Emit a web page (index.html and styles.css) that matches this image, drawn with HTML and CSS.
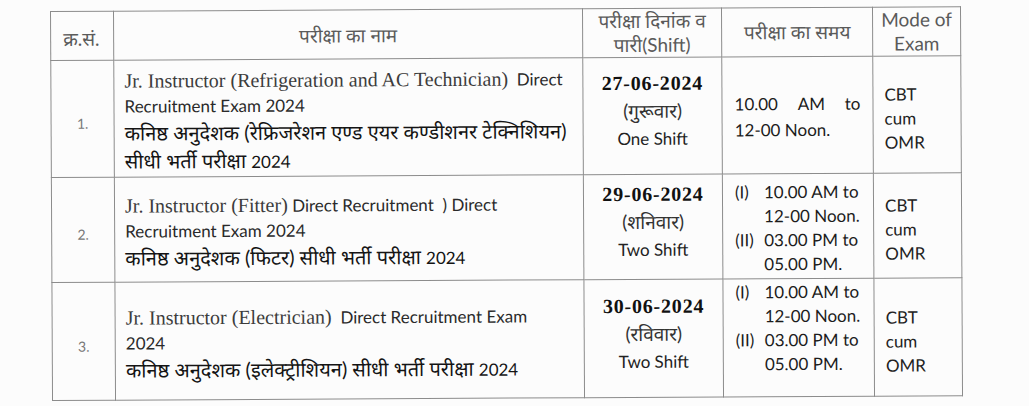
FILE: index.html
```html
<!DOCTYPE html>
<html lang="hi">
<head>
<meta charset="utf-8">
<title>परीक्षा कार्यक्रम</title>
<link rel="stylesheet" href="styles.css">
</head>
<body>
<div class="sheet">
  <table class="exam">
    <colgroup>
      <col class="c-no">
      <col class="c-name">
      <col class="c-date">
      <col class="c-time">
      <col class="c-mode">
    </colgroup>
    <thead>
      <tr class="rh">
        <th class="h-no">क्र.सं.</th>
        <th class="h-name">परीक्षा का नाम</th>
        <th class="h-date">परीक्षा दिनांक व<br>पारी(<span class="lat">Shift</span>)</th>
        <th class="h-time">परीक्षा का समय</th>
        <th class="h-mode">Mode of<br>Exam</th>
      </tr>
    </thead>
    <tbody>
      <tr class="r1">
        <td class="no">1.</td>
        <td class="name">
          <div class="en"><span class="serif">Jr. Instructor (Refrigeration and AC Technician)</span>&nbsp; Direct<br>Recruitment Exam 2024</div>
          <div class="hi">कनिष्ठ अनुदेशक (रेफ्रिजरेशन एण्ड एयर कण्डीशनर टेक्निशियन)<br>सीधी भर्ती परीक्षा <span class="lat">2024</span></div>
        </td>
        <td class="date"><b>27-06-2024</b><br><span class="day">(गुरूवार)</span><br>One Shift</td>
        <td class="time single">
          <div class="just"><span>10.00</span><span>AM</span><span>to</span></div>
          <div>12-00 Noon.</div>
        </td>
        <td class="mode">CBT<br>cum<br>OMR</td>
      </tr>
      <tr class="r2">
        <td class="no">2.</td>
        <td class="name">
          <div class="en"><span class="serif">Jr. Instructor (Fitter)</span> Direct Recruitment&nbsp; ) Direct<br>Recruitment Exam 2024</div>
          <div class="hi">कनिष्ठ अनुदेशक (फिटर) सीधी भर्ती परीक्षा <span class="lat">2024</span></div>
        </td>
        <td class="date"><b>29-06-2024</b><br><span class="day">(शनिवार)</span><br>Two Shift</td>
        <td class="time">
          <div class="shift"><span class="lbl">(I)</span><span>10.00 AM to<br>12-00 Noon.</span><span class="lbl">(II)</span><span>03.00 PM to<br>05.00 PM.</span></div>
        </td>
        <td class="mode">CBT<br>cum<br>OMR</td>
      </tr>
      <tr class="r3">
        <td class="no">3.</td>
        <td class="name">
          <div class="en"><span class="serif">Jr. Instructor (Electrician)</span>&nbsp; Direct Recruitment Exam<br>2024</div>
          <div class="hi">कनिष्ठ अनुदेशक (इलेक्ट्रीशियन) सीधी भर्ती परीक्षा <span class="lat">2024</span></div>
        </td>
        <td class="date"><b>30-06-2024</b><br><span class="day">(रविवार)</span><br>Two Shift</td>
        <td class="time up">
          <div class="shift"><span class="lbl">(I)</span><span>10.00 AM to<br>12-00 Noon.</span><span class="lbl">(II)</span><span>03.00 PM to<br>05.00 PM.</span></div>
        </td>
        <td class="mode">CBT<br>cum<br>OMR</td>
      </tr>
    </tbody>
  </table>
</div>
</body>
</html>
```
FILE: styles.css
```css
html, body {
  margin: 0;
  padding: 0;
  background: #fcfcfc;
}

body {
  width: 1029px;
  height: 406px;
  overflow: hidden;
  font-family: Lato, "Noto Sans Devanagari", "Lohit Devanagari", "Noto Sans", sans-serif;
  color: #1c1c1c;
  font-size: 17px;
}

.sheet {
  padding: 11px 0 0 50px;
}

.exam {
  border-collapse: collapse;
  table-layout: fixed;
  width: 910px;
  transform: rotate(-0.3deg);
  transform-origin: 0 0;
}

.c-no { width: 63px; }
.c-name { width: 469px; }
.c-date { width: 139px; }
.c-time { width: 151px; }
.c-mode { width: 88px; }

.exam th,
.exam td {
  border: 1px solid #8c8c8c;
  vertical-align: middle;
  padding: 0;
  box-sizing: border-box;
}

.rh { height: 48px; }
.r1 { height: 117px; }
.r2 { height: 105px; }
.r3 { height: 118px; }

.exam th {
  font-weight: normal;
  color: #5a5a5a;
  font-size: 19px;
  line-height: 24px;
}

.h-no {
  font-size: 14px;
  color: #7a7a7a;
  text-align: left;
  padding-left: 12px !important;
  padding-top: 6px !important;
}

.h-name { padding-top: 2px !important; }

.h-date { line-height: 24px; font-size: 19px; }

.h-mode {
  color: #2e2e2e;
  font-size: 18px;
  line-height: 25px;
  vertical-align: top !important;
}

.lat { font-family: Lato, sans-serif; }

.no {
  text-align: center;
  color: #777;
  font-size: 14px;
  padding-top: 9px !important;
}

.name {
  padding-left: 10px !important;
  padding-top: 8px !important;
  white-space: nowrap;
}

.en {
  line-height: 25px;
  color: #2a2a2a;
}

.serif {
  font-family: "Liberation Serif", serif;
  font-size: 20px;
  color: #3c3c3c;
}

.hi {
  line-height: 28px;
  font-size: 20px;
  color: #141414;
}

.hi .lat { font-size: 17px; }

.date {
  text-align: center;
  line-height: 27px;
  padding-bottom: 10px !important;
  color: #222;
}

.date b {
  font-family: "Liberation Serif", serif;
  font-size: 20px;
  letter-spacing: 0.8px;
  font-weight: bold;
  color: #111;
}

.day { color: #333; font-size: 19px; }

.time {
  padding: 3px 12px 0 12px !important;
  line-height: 26px;
}

.time.single { padding-top: 4px !important; }

.time.up {
  vertical-align: top !important;
  padding-top: 1px !important;
}

.just {
  display: flex;
  justify-content: space-between;
}

.shift {
  display: grid;
  grid-template-columns: 29px 1fr;
  line-height: 24px;
  white-space: nowrap;
}

.mode {
  padding-left: 11px !important;
  padding-top: 8px !important;
  line-height: 24px;
  color: #222;
}
```
